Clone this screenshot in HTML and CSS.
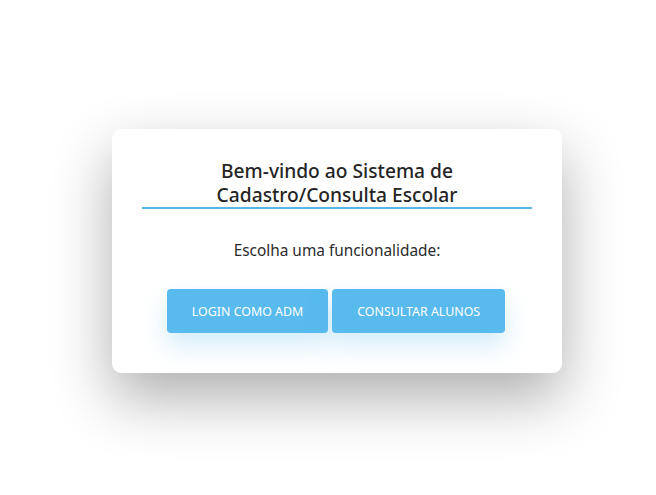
FILE: index.html
```html
<!DOCTYPE html>
<html lang="pt-BR">
<head>
<meta charset="utf-8">
<title>Sistema Escolar</title>
<link rel="stylesheet" href="styles.css">
</head>
<body>
<main class="page">
  <section class="card">
    <h1 class="title">Bem-vindo ao Sistema de<br>Cadastro/Consulta Escolar</h1>
    <p class="subtitle">Escolha uma funcionalidade:</p>
    <div class="actions">
      <button class="btn btn-login">LOGIN COMO ADM</button>
      <button class="btn btn-consult">CONSULTAR ALUNOS</button>
    </div>
  </section>
</main>
</body>
</html>
```

FILE: styles.css
```css
html, body {
  margin: 0;
  padding: 0;
  background: #ffffff;
}
body {
  font-family: "Noto Sans", "Open Sans", sans-serif;
  color: #2b2b2b;
}
.page {
  display: flex;
  justify-content: center;
  align-items: flex-start;
  padding-top: 129px;
  padding-left: 18px;
  min-height: 495px;
  box-sizing: border-box;
}
.card {
  width: 450px;
  box-sizing: border-box;
  padding: 30px 30px 40px;
  background: #fff;
  border-radius: 9px;
  box-shadow: 0 25px 60px rgba(0, 0, 0, 0.32);
  text-align: center;
}
.title {
  margin: 0;
  font-size: 19.2px;
  font-weight: 500;
  line-height: 24px;
  color: #252525;
  border-bottom: 2px solid #5ab6e6;
}
.subtitle {
  margin: 32px 0 0;
  font-size: 15.4px;
  line-height: 20px;
  color: #2b2b2b;
}
.actions {
  margin-top: 28px;
  display: flex;
  justify-content: center;
  gap: 4px;
  padding-right: 2px;
}
.btn {
  height: 44px;
  padding: 0 25px;
  border: none;
  border-radius: 4px;
  background: #58baed;
  color: #fff;
  font-family: "Noto Sans", "Open Sans", sans-serif;
  font-size: 12.4px;
  box-shadow: 0 12px 24px rgba(88, 186, 237, 0.28);
}
```
